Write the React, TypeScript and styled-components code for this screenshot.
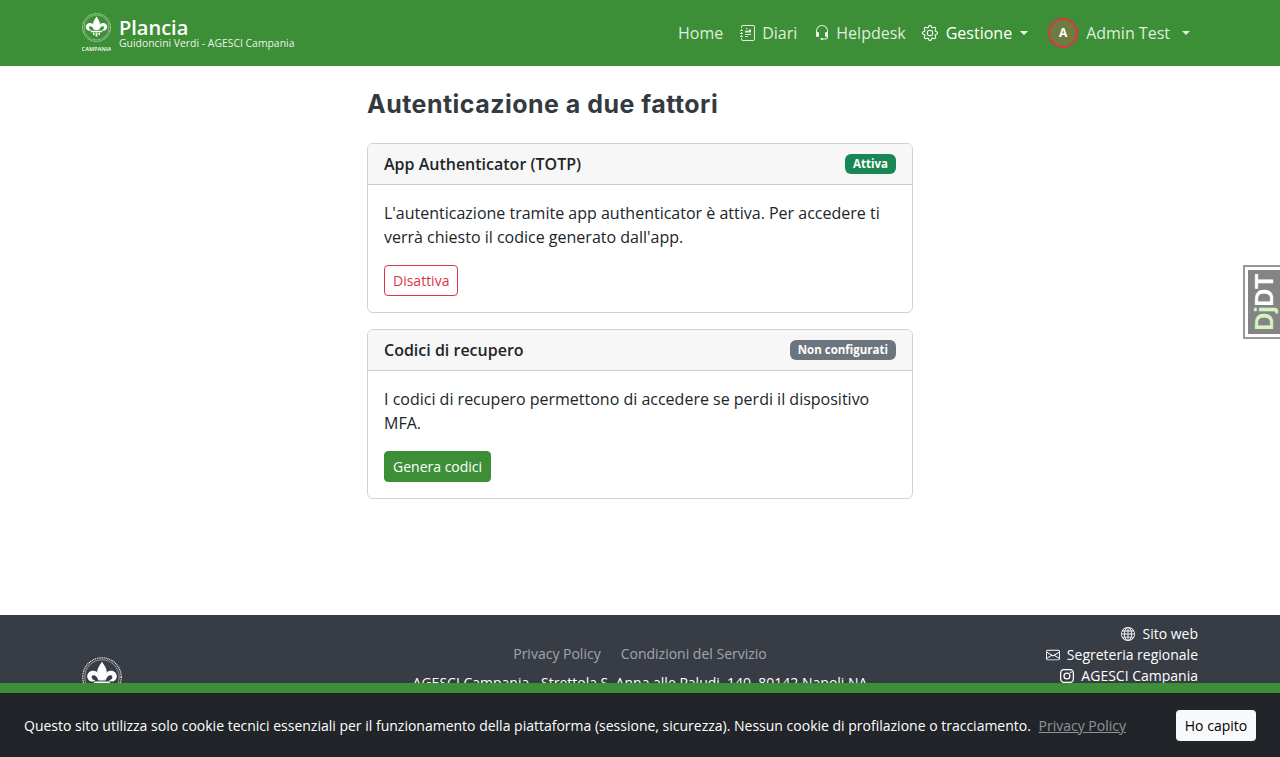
import React from "react";
import styled, { createGlobalStyle } from "styled-components";
import { BsJournalRichtext, BsHeadset, BsGear, BsGlobe, BsEnvelope, BsInstagram } from "react-icons/bs";

const GlobalStyle = createGlobalStyle`
  html, body {
    margin: 0;
    height: 757px;
    overflow: hidden;
    background: #fff;
    color: #212529;
    font-family: "Open Sans", "Liberation Sans", sans-serif;
    font-size: 16px;
    line-height: 1.5;
  }
  * { box-sizing: border-box; }
`;

const Navbar = styled.nav`
  height: 66px;
  background: #3d8f37;
  display: flex;
  align-items: center;
  justify-content: space-between;
  padding: 0 82px;
`;

const Brand = styled.div`
  display: flex;
  align-items: center;
  gap: 8px;
  color: #fff;
`;

const BrandText = styled.div`
  display: flex;
  flex-direction: column;
`;

const BrandTitle = styled.span`
  font-size: 20px;
  font-weight: 600;
  line-height: 19px;
  margin-top: 1px;
`;

const BrandSub = styled.span`
  font-size: 10.4px;
  line-height: 12px;
  color: rgba(255, 255, 255, 0.92);
`;

const NavList = styled.div`
  display: flex;
  align-items: center;
`;

const NavLink = styled.a<{ $active?: boolean; $iconGap?: number }>`
  display: flex;
  align-items: center;
  gap: ${(p) => p.$iconGap ?? 6}px;
  padding: 8px;
  font-size: 16px;
  color: ${(p) => (p.$active ? "#fff" : "rgba(255, 255, 255, 0.85)")};
  font-weight: ${(p) => (p.$active ? 500 : 400)};
  svg { font-size: 16px; }
  &:nth-child(-n + 2) { padding-right: 9px; }
`;

const Caret = styled.span`
  width: 0;
  height: 0;
  border-top: 4.8px solid currentColor;
  border-left: 4.8px solid transparent;
  border-right: 4.8px solid transparent;
`;

const UserMenu = styled(NavLink)`
  margin-left: 4px;
  gap: 8px;
`;

const UserName = styled.span`
  margin-right: 4px;
`;

const Avatar = styled.span`
  width: 30px;
  height: 30px;
  border-radius: 50%;
  border: 2px solid #dc3545;
  background: #6e7d3f;
  color: #fff;
  font-size: 12px;
  font-weight: 700;
  display: flex;
  align-items: center;
  justify-content: center;
`;

const Main = styled.main`
  height: 549px;
  width: 546px;
  margin: 0 auto;
  padding-top: 20px;
  display: flex;
  flex-direction: column;
  gap: 16px;
`;

const Heading = styled.h1`
  margin: 0 0 5px;
  font-family: Inter, "Liberation Sans", sans-serif;
  font-size: 25px;
  font-weight: 700;
  letter-spacing: 0.47px;
  line-height: 36px;
  color: #343a40;
`;

const Card = styled.section`
  border: 1px solid rgba(0, 0, 0, 0.175);
  border-radius: 6px;
  overflow: hidden;
`;

const CardHeader = styled.header`
  height: 41px;
  padding: 0 16px;
  display: flex;
  align-items: center;
  justify-content: space-between;
  background: #f7f7f7;
  border-bottom: 1px solid rgba(0, 0, 0, 0.175);
  font-weight: 600;
  color: #212529;
`;

const Badge = styled.span<{ $tone: string }>`
  padding: 0 8px;
  height: 20px;
  display: flex;
  align-items: center;
  border-radius: 6px;
  background: ${(p) => p.$tone};
  color: #fff;
  font-size: 11.5px;
  font-weight: 700;
`;

const CardBody = styled.div`
  padding: 16px;
`;

const CardText = styled.p`
  margin: 0 0 16px;
`;

const Button = styled.button<{ $variant: "outline" | "solid" }>`
  display: block;
  height: 31px;
  padding: 0 8px;
  border-radius: 4px;
  font-family: inherit;
  font-size: 14px;
  border: 1px solid ${(p) => (p.$variant === "outline" ? "#dc3545" : "#3d8f37")};
  background: ${(p) => (p.$variant === "outline" ? "transparent" : "#3d8f37")};
  color: ${(p) => (p.$variant === "outline" ? "#dc3545" : "#fff")};
`;

const Footer = styled.footer`
  background: #373c45;
  height: 200px;
  padding: 8px 82px 0;
  display: grid;
  grid-template-columns: 1fr 1fr 1fr;
  font-size: 14px;
  line-height: 21px;
`;

const FooterLogo = styled.div`
  padding-top: 34px;
`;

const FooterCenter = styled.div`
  padding-top: 20px;
  color: #fff;
  text-align: center;
  white-space: nowrap;
  display: flex;
  flex-direction: column;
  align-items: center;
  gap: 8px;
`;

const LegalLinks = styled.div`
  display: flex;
  gap: 20px;
`;

const LegalLink = styled.a`
  color: rgba(255, 255, 255, 0.55);
`;

const FooterLinks = styled.div`
  display: flex;
  flex-direction: column;
  align-items: flex-end;
  color: #fff;
`;

const FooterLink = styled.a`
  display: flex;
  align-items: center;
  gap: 7px;
  svg { font-size: 14px; }
`;

const CookieBar = styled.div`
  position: fixed;
  left: 0;
  right: 0;
  bottom: 0;
  height: 74px;
  border-top: 10px solid #3d8f37;
  background: #212529;
  padding: 0 24px;
  display: flex;
  align-items: center;
  justify-content: space-between;
  color: #fff;
  font-size: 14px;
`;

const CookieText = styled.span`
  a {
    margin-left: 4px;
    color: rgba(255, 255, 255, 0.5);
    text-decoration: underline;
  }
`;

const CookieButton = styled.button`
  width: 80px;
  height: 31px;
  border: 0;
  border-radius: 4px;
  background: #f8f9fa;
  color: #000;
  font-family: inherit;
  font-size: 14px;
`;

const DebugHandle = styled.div`
  position: fixed;
  top: 265px;
  right: 0;
  width: 37px;
  height: 74px;
  padding: 3px 0 3px 3px;
  background: #fff;
  border: 2px solid #999;
  border-right: 0;
`;

const DebugInner = styled.div`
  width: 100%;
  height: 100%;
  background: #848484;
  display: flex;
  align-items: center;
  justify-content: center;
`;

const DebugLabel = styled.span`
  transform: rotate(-90deg);
  font-family: "Liberation Sans", sans-serif;
  font-size: 25px;
  font-weight: 700;
  line-height: 1;
  letter-spacing: -0.5px;
  color: #fff;
  white-space: nowrap;
  em {
    font-style: normal;
    color: #d5f5c0;
  }
`;

const PETAL =
  "M37 37C25 30 12 38 13 50c1 10 13 15 20 8-5 0-9-3-9-8 0-5 6-6 11-2 3 3 5 7 6 11h3C44 50 40 44 37 37z";

// fleur-de-lis inside a dotted ring, shared by the navbar and the footer
const ScoutLogo = ({ size, caption }: { size: number; caption?: boolean }) => (
  <svg width={size} height={caption ? size * 1.38 : size} viewBox={caption ? "0 0 100 138" : "0 0 100 100"} fill="none">
    <circle cx="50" cy="50" r="48" stroke="#fff" strokeWidth="3" strokeDasharray="2.500 2" />
    <circle cx="50" cy="50" r="43" stroke="#fff" strokeWidth="1.500" opacity="0.8" />
    <path fill="#fff" d="M50 12c7 10 13 19 12 30-1 7-5 12-6 17H44c-1-5-5-10-6-17-1-11 5-20 12-30z" />
    <path fill="#fff" d={PETAL} />
    <path fill="#fff" d={PETAL} transform="translate(100 0) scale(-1 1)" />
    <path fill="#fff" d="M30 61h40v5H30zM38 68h5v10l-5-3zM47 68h6v13h-6zM57 68h5v7l-5 3z" />
    {caption && (
      <text x="50" y="132" textAnchor="middle" fill="#fff" fontSize="19" fontWeight="600" letterSpacing="0.5" fontFamily="Open Sans, sans-serif">
        CAMPANIA
      </text>
    )}
  </svg>
);

const App = () => (
  <>
    <GlobalStyle />
    <Navbar>
      <Brand>
        <ScoutLogo size={29} caption />
        <BrandText>
          <BrandTitle>Plancia</BrandTitle>
          <BrandSub>Guidoncini Verdi - AGESCI Campania</BrandSub>
        </BrandText>
      </Brand>
      <NavList>
        <NavLink>Home</NavLink>
        <NavLink><BsJournalRichtext />Diari</NavLink>
        <NavLink><BsHeadset />Helpdesk</NavLink>
        <NavLink $active $iconGap={8}><BsGear />Gestione<Caret /></NavLink>
        <UserMenu>
          <Avatar>A</Avatar>
          <UserName>Admin Test</UserName>
          <Caret />
        </UserMenu>
      </NavList>
    </Navbar>
    <Main>
      <Heading>Autenticazione a due fattori</Heading>
      <Card>
        <CardHeader>
          App Authenticator (TOTP)
          <Badge $tone="#198754">Attiva</Badge>
        </CardHeader>
        <CardBody>
          <CardText>
            L'autenticazione tramite app authenticator è attiva. Per accedere ti verrà chiesto il codice generato dall'app.
          </CardText>
          <Button $variant="outline">Disattiva</Button>
        </CardBody>
      </Card>
      <Card>
        <CardHeader>
          Codici di recupero
          <Badge $tone="#6c757d">Non configurati</Badge>
        </CardHeader>
        <CardBody>
          <CardText>
            I codici di recupero permettono di accedere se perdi il dispositivo MFA.
          </CardText>
          <Button $variant="solid">Genera codici</Button>
        </CardBody>
      </Card>
    </Main>
    <Footer>
      <FooterLogo>
        <ScoutLogo size={40} />
      </FooterLogo>
      <FooterCenter>
        <LegalLinks>
          <LegalLink>Privacy Policy</LegalLink>
          <LegalLink>Condizioni del Servizio</LegalLink>
        </LegalLinks>
        <span>AGESCI Campania - Strettola S. Anna alle Paludi, 140, 80142 Napoli NA</span>
      </FooterCenter>
      <FooterLinks>
        <FooterLink><BsGlobe />Sito web</FooterLink>
        <FooterLink><BsEnvelope />Segreteria regionale</FooterLink>
        <FooterLink><BsInstagram />AGESCI Campania</FooterLink>
      </FooterLinks>
    </Footer>
    <CookieBar>
      <CookieText>
        Questo sito utilizza solo cookie tecnici essenziali per il funzionamento della piattaforma (sessione, sicurezza). Nessun cookie di profilazione o tracciamento. <a>Privacy Policy</a>
      </CookieText>
      <CookieButton>Ho capito</CookieButton>
    </CookieBar>
    <DebugHandle>
      <DebugInner>
        <DebugLabel><em>Dj</em>DT</DebugLabel>
      </DebugInner>
    </DebugHandle>
  </>
);

export default App;
